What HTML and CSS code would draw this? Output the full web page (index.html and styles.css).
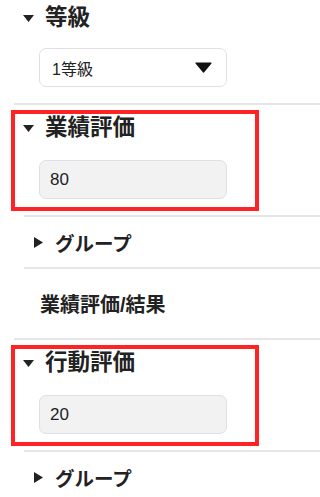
FILE: index.html
```html
<!DOCTYPE html>
<html lang="ja">
<head>
<meta charset="utf-8">
<link rel="stylesheet" href="styles.css">
</head>
<body>
<div class="tree">
  <section class="sec first">
    <div class="head">
      <svg class="tri-down" width="11" height="7" viewBox="0 0 11 7"><path d="M0 0H11L5.5 7Z"/></svg>
      <span>等級</span>
    </div>
    <div class="field select">
      <span>1等級</span>
      <svg class="caret" width="17" height="11" viewBox="0 0 17 11"><path d="M1 1H16L8.5 10Z"/></svg>
    </div>
  </section>
  <div class="sep outer"></div>
  <section class="sec boxed">
    <div class="head">
      <svg class="tri-down" width="11" height="7" viewBox="0 0 11 7"><path d="M0 0H11L5.5 7Z"/></svg>
      <span>業績評価</span>
    </div>
    <div class="field input">80</div>
  </section>
  <div class="sep inner"></div>
  <div class="row group">
    <svg class="tri-right" width="9" height="11" viewBox="0 0 9 11"><path d="M0 0L9 5.5L0 11Z"/></svg>
    <span>グループ</span>
  </div>
  <div class="sep inner"></div>
  <div class="row item">業績評価/結果</div>
  <div class="sep outer"></div>
  <section class="sec boxed">
    <div class="head">
      <svg class="tri-down" width="11" height="7" viewBox="0 0 11 7"><path d="M0 0H11L5.5 7Z"/></svg>
      <span>行動評価</span>
    </div>
    <div class="field input">20</div>
  </section>
  <div class="sep inner"></div>
  <div class="row group">
    <svg class="tri-right" width="9" height="11" viewBox="0 0 9 11"><path d="M0 0L9 5.5L0 11Z"/></svg>
    <span>グループ</span>
  </div>
</div>
</body>
</html>
```
FILE: styles.css
```css
html, body {
  margin: 0;
  padding: 0;
  background: #ffffff;
}
body {
  font-family: "Liberation Sans", "Noto Sans CJK JP", sans-serif;
  color: #222222;
  overflow: hidden;
}
.tree {
  display: flex;
  flex-direction: column;
}
.sec {
  margin-left: 11px;
  width: 248px;
  box-sizing: border-box;
  border: 4px solid transparent;
  padding-bottom: 8px;
  margin-top: 5px;
}
.sec.first {
  margin-top: 0;
}
.sec.boxed {
  border-color: #ff2424;
}
.head {
  display: flex;
  align-items: center;
  gap: 11px;
  height: 28px;
  padding-left: 8px;
  font-size: 22.5px;
  font-weight: bold;
  line-height: 28px;
}
.tri-down path,
.tri-right path {
  fill: #222222;
}
.field {
  margin-left: 24px;
  margin-top: 18px;
  width: 188px;
  height: 39px;
  box-sizing: border-box;
  border: 1px solid #e0e0e4;
  border-radius: 7px;
  display: flex;
  align-items: center;
  font-size: 16px;
}
.sec.first .field {
  margin-top: 16px;
}
.select {
  background: #ffffff;
  justify-content: space-between;
  padding: 0 14px 0 12px;
}
.caret path {
  fill: #111111;
  stroke: #111111;
  stroke-width: 1.2;
  stroke-linejoin: round;
}
.input {
  background: #f2f2f3;
  padding-left: 10px;
  font-size: 17px;
}
.sep {
  height: 2px;
  background: #e6e6e6;
  margin-top: 4px;
}
.sep.outer {
  margin-left: 14px;
}
.sep.inner {
  margin-left: 24px;
}
.row + .sep {
  margin-top: 0;
}
.row {
  display: flex;
  align-items: center;
  font-weight: bold;
}
.group {
  height: 50px;
  padding-left: 34px;
  gap: 12px;
  font-size: 19.5px;
}
.item {
  height: 69px;
  padding-left: 40px;
  font-size: 20px;
}
```
